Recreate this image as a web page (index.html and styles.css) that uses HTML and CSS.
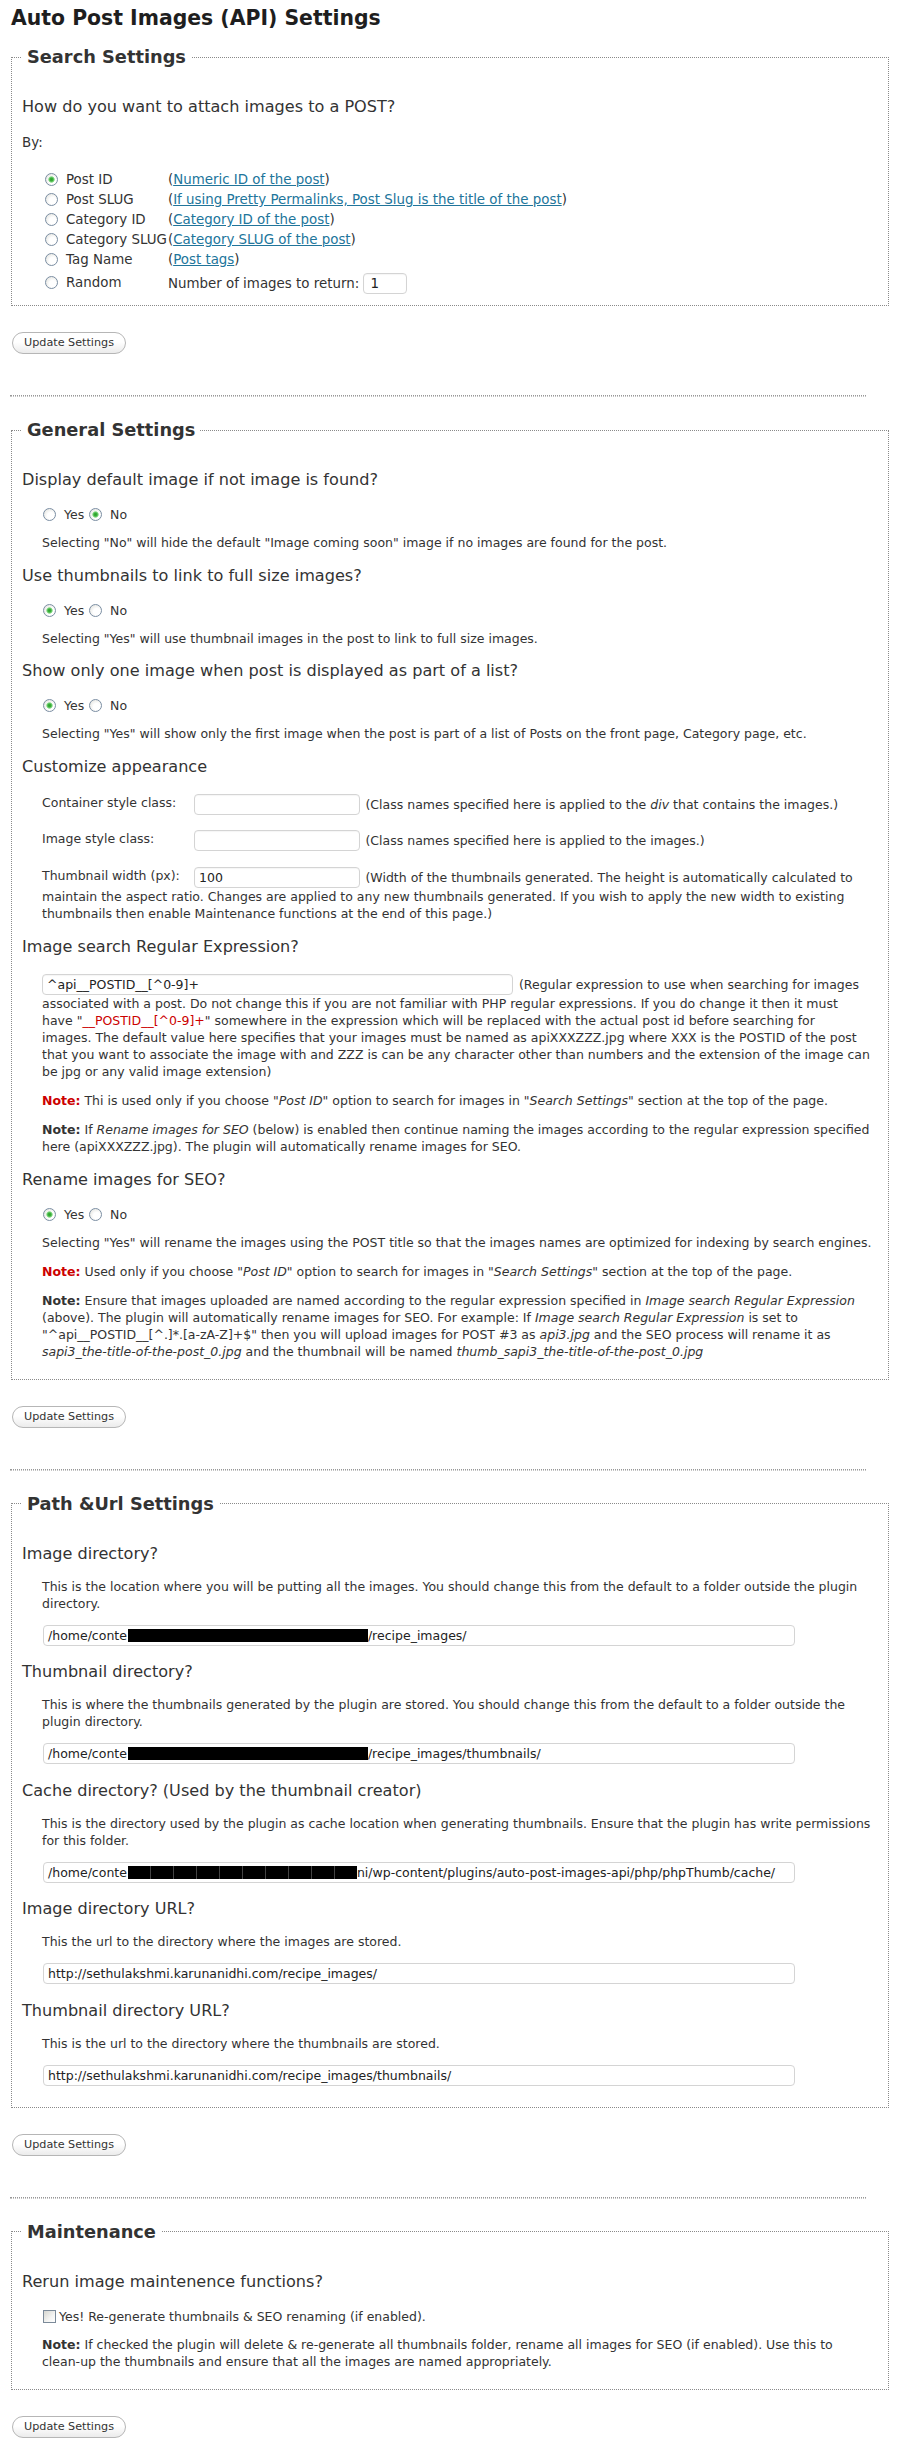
FILE: index.html
```html
<!DOCTYPE html>
<html lang="en">
<head>
<meta charset="utf-8">
<title>Auto Post Images (API) Settings</title>
<link rel="stylesheet" href="styles.css">
</head>
<body>
<div class="wrap">
  <h2 class="page-title">Auto Post Images (API) Settings</h2>
  <form class="settings" action="#">

    <fieldset class="box box-search">
      <legend>Search Settings</legend>
      <h3 class="q">How do you want to attach images to a POST?</h3>
      <p class="by">By:</p>
      <table class="opts">
        <tr><td class="oc"><input type="radio" name="search" id="s1" checked></td><td class="ol"><label for="s1">Post ID</label></td><td class="od">(<a href="#">Numeric ID of the post</a>)</td></tr>
        <tr><td class="oc"><input type="radio" name="search" id="s2"></td><td class="ol"><label for="s2">Post SLUG</label></td><td class="od">(<a href="#">If using Pretty Permalinks, Post Slug is the title of the post</a>)</td></tr>
        <tr><td class="oc"><input type="radio" name="search" id="s3"></td><td class="ol"><label for="s3">Category ID</label></td><td class="od">(<a href="#">Category ID of the post</a>)</td></tr>
        <tr><td class="oc"><input type="radio" name="search" id="s4"></td><td class="ol"><label for="s4">Category SLUG</label></td><td class="od">(<a href="#">Category SLUG of the post</a>)</td></tr>
        <tr><td class="oc"><input type="radio" name="search" id="s5"></td><td class="ol"><label for="s5">Tag Name</label></td><td class="od">(<a href="#">Post tags</a>)</td></tr>
        <tr><td class="oc"><input type="radio" name="search" id="s6"></td><td class="ol"><label for="s6">Random</label></td><td class="od">Number of images to return: <input type="text" class="ftext num" value="1"></td></tr>
      </table>
    </fieldset>
    <div class="submit"><button type="button" class="btn">Update Settings</button></div>
    <hr class="sep">

    <fieldset class="box">
      <legend>General Settings</legend>
      <div class="group">
        <h3 class="q">Display default image if not image is found?</h3>
        <p class="radios"><input type="radio" name="def"> Yes <input type="radio" name="def" checked> No</p>
        <p class="desc">Selecting "No" will hide the default "Image coming soon" image if no images are found for the post.</p>
      </div>
      <div class="group">
        <h3 class="q">Use thumbnails to link to full size images?</h3>
        <p class="radios"><input type="radio" name="thumb" checked> Yes <input type="radio" name="thumb"> No</p>
        <p class="desc">Selecting "Yes" will use thumbnail images in the post to link to full size images.</p>
      </div>
      <div class="group">
        <h3 class="q">Show only one image when post is displayed as part of a list?</h3>
        <p class="radios"><input type="radio" name="one" checked> Yes <input type="radio" name="one"> No</p>
        <p class="desc">Selecting "Yes" will show only the first image when the post is part of a list of Posts on the front page, Category page, etc.</p>
      </div>
      <div class="group">
        <h3 class="q">Customize appearance</h3>
        <p class="frow"><label class="flabel">Container style class:</label><input type="text" class="ftext"> (Class names specified here is applied to the <em>div</em> that contains the images.)</p>
        <p class="frow"><label class="flabel">Image style class:</label><input type="text" class="ftext"> (Class names specified here is applied to the images.)</p>
        <p class="frow"><label class="flabel">Thumbnail width (px):</label><input type="text" class="ftext" value="100"> (Width of the thumbnails generated. The height is automatically calculated to maintain the aspect ratio. Changes are applied to any new thumbnails generated. If you wish to apply the new width to existing thumbnails then enable Maintenance functions at the end of this page.)</p>
      </div>
      <div class="group">
        <h3 class="q">Image search Regular Expression?</h3>
        <p class="frow frow-regex"><input type="text" class="ftext regex" value="^api__POSTID__[^0-9]+"> (Regular expression to use when searching for images<br>associated with a post. Do not change this if you are not familiar with PHP regular expressions. If you do change it then it must<br>have "<span class="red">__POSTID__[^0-9]+</span>" somewhere in the expression which will be replaced with the actual post id before searching for<br>images. The default value here specifies that your images must be named as apiXXXZZZ.jpg where XXX is the POSTID of the post<br>that you want to associate the image with and ZZZ is can be any character other than numbers and the extension of the image can<br>be jpg or any valid image extension)</p>
        <p class="desc"><strong class="red">Note:</strong> Thi is used only if you choose <em>"Post ID"</em> option to search for images in "<em>Search Settings</em>" section at the top of the page.</p>
        <p class="desc"><strong>Note:</strong> If <em>Rename images for SEO</em> (below) is enabled then continue naming the images according to the regular expression specified here (apiXXXZZZ.jpg). The plugin will automatically rename images for SEO.</p>
      </div>
      <div class="group">
        <h3 class="q">Rename images for SEO?</h3>
        <p class="radios"><input type="radio" name="seo" checked> Yes <input type="radio" name="seo"> No</p>
        <p class="desc">Selecting "Yes" will rename the images using the POST title so that the images names are optimized for indexing by search engines.</p>
        <p class="desc"><strong class="red">Note:</strong> Used only if you choose <em>"Post ID"</em> option to search for images in "<em>Search Settings</em>" section at the top of the page.</p>
        <p class="desc"><strong>Note:</strong> Ensure that images uploaded are named according to the regular expression specified in <em>Image search Regular Expression</em> (above). The plugin will automatically rename images for SEO. For example: If <em>Image search Regular Expression</em> is set to "^api__POSTID__[^.]*.[a-zA-Z]+$" then you will upload images for POST #3 as <em>api3.jpg</em> and the SEO process will rename it as <em>sapi3_the-title-of-the-post_0.jpg</em> and the thumbnail will be named <em>thumb_sapi3_the-title-of-the-post_0.jpg</em></p>
      </div>
    </fieldset>
    <div class="submit"><button type="button" class="btn">Update Settings</button></div>
    <hr class="sep">

    <fieldset class="box box-paths">
      <legend>Path &amp;Url Settings</legend>
      <div class="group">
        <h3 class="q">Image directory?</h3>
        <p class="desc">This is the location where you will be putting all the images. You should change this from the default to a folder outside the plugin directory.</p>
        <div class="pathbox"><span>/home/conte</span><span class="redact"></span><span>/recipe_images/</span></div>
      </div>
      <div class="group">
        <h3 class="q">Thumbnail directory?</h3>
        <p class="desc">This is where the thumbnails generated by the plugin are stored. You should change this from the default to a folder outside the plugin directory.</p>
        <div class="pathbox"><span>/home/conte</span><span class="redact"></span><span>/recipe_images/thumbnails/</span></div>
      </div>
      <div class="group">
        <h3 class="q">Cache directory? (Used by the thumbnail creator)</h3>
        <p class="desc">This is the directory used by the plugin as cache location when generating thumbnails. Ensure that the plugin has write permissions for this folder.</p>
        <div class="pathbox"><span>/home/conte</span><span class="redact redact-short"></span><span>ni/wp-content/plugins/auto-post-images-api/php/phpThumb/cache/</span></div>
      </div>
      <div class="group">
        <h3 class="q">Image directory URL?</h3>
        <p class="desc">This the url to the directory where the images are stored.</p>
        <div class="pathbox"><span>http://sethulakshmi.karunanidhi.com/recipe_images/</span></div>
      </div>
      <div class="group">
        <h3 class="q">Thumbnail directory URL?</h3>
        <p class="desc">This is the url to the directory where the thumbnails are stored.</p>
        <div class="pathbox"><span>http://sethulakshmi.karunanidhi.com/recipe_images/thumbnails/</span></div>
      </div>
    </fieldset>
    <div class="submit"><button type="button" class="btn">Update Settings</button></div>
    <hr class="sep">

    <fieldset class="box">
      <legend>Maintenance</legend>
      <div class="group">
        <h3 class="q">Rerun image maintenence functions?</h3>
        <p class="checkrow"><input type="checkbox" id="regen"><label for="regen">Yes! Re-generate thumbnails &amp; SEO renaming (if enabled).</label></p>
        <p class="desc"><strong>Note:</strong> If checked the plugin will delete &amp; re-generate all thumbnails folder, rename all images for SEO (if enabled). Use this to <span class="nobr">clean-up</span> the thumbnails and ensure that all the images are named appropriately.</p>
      </div>
    </fieldset>
    <div class="submit"><button type="button" class="btn">Update Settings</button></div>
  </form>
</div>
</body>
</html>
```

FILE: styles.css
```css
html, body {
  margin: 0;
  padding: 0;
  background: #fff;
}

body {
  font-family: "DejaVu Sans", Verdana, sans-serif;
  font-size: 12.5px;
  line-height: 17px;
  color: #333;
}

.wrap {
  padding: 0 12px 14px 11px;
}

.page-title {
  margin: 6px 0 16px;
  font-size: 20.4px;
  line-height: 24px;
  font-weight: bold;
  color: #1e1e1e;
}

.settings {
  margin: 0;
}

/* fieldsets */
.box {
  margin: 0;
  min-width: 0;
  padding: 29px 9px 7px 10px;
  border: 1px dotted #8a8a8a;
}

.box legend {
  padding: 0 5px;
  font-size: 17.8px;
  line-height: 22px;
  font-weight: bold;
  color: #333;
}

.box-paths .group:last-child .pathbox {
  margin-bottom: 14px;
}

.group {
  margin-bottom: 14.5px;
}

.group:last-child {
  margin-bottom: 12px;
}

.q {
  margin: 0 0 14px;
  font-size: 16.1px;
  line-height: 20px;
  font-weight: normal;
  color: #333;
}

/* search settings table */
.by {
  margin: 16px 0 17px;
  font-size: 13.4px;
  line-height: 20px;
}

.opts {
  margin: 0 0 3px 23px;
  border-collapse: collapse;
  font-size: 13.4px;
  line-height: 20px;
}

.opts td {
  padding: 0;
  white-space: nowrap;
}

.opts .ol {
  padding-right: 1px;
}

.opts .oc input[type="radio"] {
  margin: 0 8px 0 0;
}

.opts a {
  color: #21759b;
  text-decoration: underline;
}

.ftext.num {
  width: 44px;
  margin: 3px 0 1px;
  padding: 0 6px;
  font-size: 13.4px;
}

/* radios / checkbox */
input[type="radio"] {
  -webkit-appearance: none;
  appearance: none;
  box-sizing: border-box;
  width: 13px;
  height: 13px;
  margin: 0 4px 0 1px;
  vertical-align: -2px;
  border: 1px solid #7b8ea3;
  border-radius: 50%;
  background: radial-gradient(circle at 62% 62%, #ffffff 0, #ffffff 35%, #dcdcd6 100%);
}

input[type="radio"]:checked {
  background:
    radial-gradient(circle, #2f9e2f 0, #3bb13b 1.6px, #8fdc8f 2.8px, rgba(255,255,255,0) 3.6px),
    radial-gradient(circle at 62% 62%, #ffffff 0, #ffffff 35%, #dcdcd6 100%);
}

input[type="checkbox"] {
  -webkit-appearance: none;
  appearance: none;
  box-sizing: border-box;
  width: 13px;
  height: 13px;
  margin: 0 3px 0 1px;
  vertical-align: -2px;
  border: 1px solid #7b8a99;
  border-radius: 0;
  background: linear-gradient(135deg, #d6d6d0 0, #f4f4f2 60%, #ffffff 100%);
}

.radios {
  margin: 0 0 11px 20px;
}

.checkrow {
  margin: 0 0 11px 20px;
}

.q + .radios,
.q + .checkrow {
  margin-top: 16px;
}

.q + .frow {
  margin-top: 17px;
}

.desc {
  margin: 0 0 12px 20px;
}

.red {
  color: #cc0000;
}

strong {
  font-weight: bold;
}

.nobr {
  white-space: nowrap;
}

/* form rows */
.frow {
  margin: 0 0 15.5px 20px;
}

.frow-regex {
  margin-bottom: 12px;
}

.flabel {
  display: inline-block;
  width: 152px;
  vertical-align: top;
}

.ftext {
  box-sizing: border-box;
  height: 21px;
  width: 165.5px;
  margin: 0 2px 0 0;
  padding: 0 4px;
  border: 1px solid #d4d4d4;
  border-radius: 4px;
  background: #fff;
  font-family: "DejaVu Sans", Verdana, sans-serif;
  font-size: 12.5px;
  color: #222;
  vertical-align: baseline;
  box-shadow: inset 0 1px 1px rgba(0,0,0,0.04);
}

.ftext.regex {
  width: 471px;
}

.pathbox {
  display: flex;
  align-items: center;
  box-sizing: border-box;
  width: 752px;
  height: 21px;
  margin: 13px 0 16.5px 21px;
  padding: 0 4px;
  border: 1px solid #d4d4d4;
  border-radius: 4px;
  background: #fff;
  color: #222;
  white-space: nowrap;
  overflow: hidden;
}

.redact {
  display: inline-block;
  width: 240px;
  height: 13px;
  margin-left: 1px;
  background: #000;
}

.redact-short {
  width: 229px;
  background: repeating-linear-gradient(90deg, #000 0, #000 22px, #444 22px, #444 23px);
}

/* buttons */
.submit {
  display: flex;
  margin: 26px 0 41px 1px;
}

.btn {
  box-sizing: border-box;
  height: 22px;
  padding: 0 11px;
  border: 1px solid #b6b6b6;
  border-radius: 11px;
  background: linear-gradient(#ffffff 0, #ffffff 45%, #ebebeb 100%);
  font-family: "DejaVu Sans", Verdana, sans-serif;
  font-size: 11.2px;
  line-height: 20px;
  color: #333;
}

.sep {
  height: 0;
  width: 856px;
  margin: 0 0 22px -1px;
  border: 0;
  border-top: 1px dotted #999;
  border-bottom: 1px dotted #c4c4c4;
}
```
